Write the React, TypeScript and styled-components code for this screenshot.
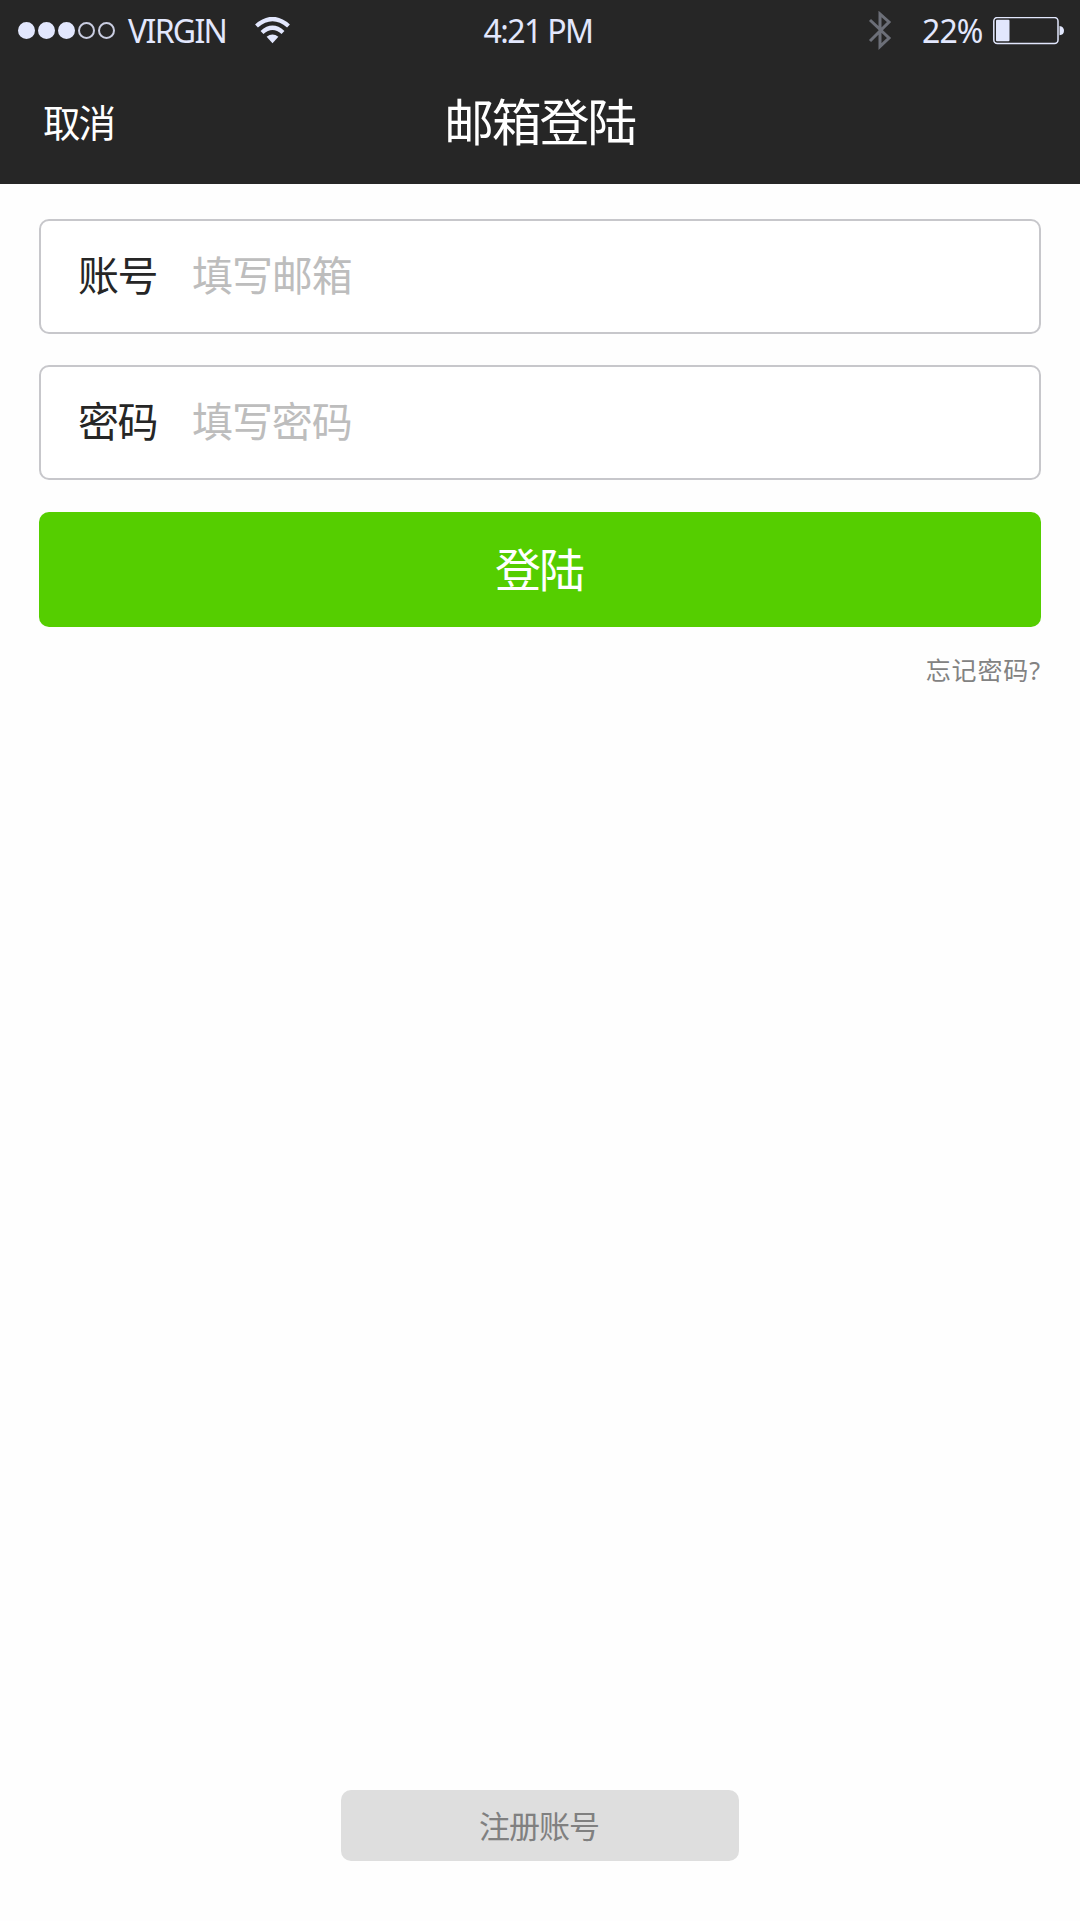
import React from "react";
import styled, { createGlobalStyle } from "styled-components";

const GlobalStyle = createGlobalStyle`
  *, *::before, *::after { box-sizing: border-box; }
  body {
    margin: 0;
    background: #fefefe;
    font-family: "Noto Sans", "Noto Sans CJK SC", sans-serif;
  }
  button, input { font-family: "Noto Sans CJK SC", sans-serif; }
`;

const Screen = styled.div`
  display: flex;
  flex-direction: column;
  width: 1080px;
  height: 1921px;
  background: #fefefe;
`;

const Header = styled.header`
  height: 184px;
  flex: none;
  background: #262626;
`;

const StatusBar = styled.div`
  display: grid;
  grid-template-columns: 1fr auto 1fr;
  align-items: center;
  height: 60px;
  padding: 0 16px 0 18px;
  color: #e2e7fd;
`;

const StatusGroup = styled.div<{ $end?: boolean }>`
  display: flex;
  align-items: center;
  justify-content: ${(p) => (p.$end ? "flex-end" : "flex-start")};
`;

const StatusText = styled.span<{ $tracking: number; $width: number }>`
  width: ${(p) => p.$width}px;
  padding-top: 1px;
  font-size: 32px;
  line-height: 60px;
  letter-spacing: ${(p) => p.$tracking}px;
  white-space: nowrap;
`;

const SignalDots = styled.div`
  display: flex;
  gap: 3px;
  margin-right: 13px;
`;

const Dot = styled.i<{ $on: boolean }>`
  width: 17px;
  height: 17px;
  border: 2px solid ${(p) => (p.$on ? "#e2e7fd" : "#c9cde1")};
  border-radius: 50%;
  background: ${(p) => (p.$on ? "#e2e7fd" : "transparent")};
`;

const Icon = styled.svg<{ $gap?: number }>`
  display: block;
  flex: none;
  margin-right: ${(p) => p.$gap ?? 0}px;
`;

const NavBar = styled.nav`
  display: grid;
  grid-template-columns: 1fr auto 1fr;
  align-items: center;
  height: 124px;
  padding: 0 44px 0 43px;
`;

const Cancel = styled.button`
  justify-self: start;
  padding: 0 0 2px;
  border: 0;
  background: none;
  color: #fff;
  font-size: 37.5px;
  line-height: 122px;
  letter-spacing: -2px;
`;

const Title = styled.h1`
  margin: 0;
  padding-bottom: 5px;
  color: #fff;
  font: 400 50px/119px "Noto Sans CJK SC", sans-serif;
  letter-spacing: -2.2px;
`;

const Form = styled.form`
  display: flex;
  flex-direction: column;
  padding: 35px 39px 0;
`;

const Field = styled.label`
  display: flex;
  align-items: center;
  height: 115px;
  margin-bottom: 31px;
  padding: 0 38px 7px 37px;
  border: 2px solid #c7c7cb;
  border-radius: 10px;
  background: #fff;
`;

const FieldName = styled.span`
  width: 114px;
  color: #262626;
  font: 400 41px/60px "Noto Sans CJK SC", sans-serif;
  letter-spacing: -1.5px;
`;

const Input = styled.input`
  flex: 1;
  min-width: 0;
  height: 60px;
  padding: 0;
  border: 0;
  outline: 0;
  background: none;
  font-size: 41px;
  letter-spacing: -1.1px;
  &::placeholder { color: #bdbdbd; opacity: 1; }
`;

const Submit = styled.button`
  height: 115px;
  margin-top: 1px;
  padding: 0 2px 5px 0;
  border: 0;
  border-radius: 10px;
  background: #55ce00;
  color: #fff;
  font-size: 46px;
  letter-spacing: -2px;
`;

const Forgot = styled.a`
  align-self: flex-end;
  margin-top: 23px;
  color: #828282;
  font: 400 25px/40px "Noto Sans", "Noto Sans CJK SC", sans-serif;
  letter-spacing: 0.9px;
`;

const Footer = styled.footer`
  display: flex;
  justify-content: center;
  margin-top: auto;
  padding-bottom: 60px;
`;

const Register = styled.button`
  width: 398px;
  height: 71px;
  padding: 0 2px 3px 0;
  border: 0;
  border-radius: 10px;
  background: #dedede;
  color: #808080;
  font-size: 31px;
  letter-spacing: -1px;
`;

const signal = [true, true, true, false, false];

const fields = [
  { name: "账号", hint: "填写邮箱", type: "email" },
  { name: "密码", hint: "填写密码", type: "password" },
];

const WifiIcon = () => (
  <Icon width="35" height="28" viewBox="0 0 35 28">
    <g fill="none" stroke="#e2e7fd" strokeWidth="4.3">
      <path d="M1.5 9Q17.5 -5 33.5 9" />
      <path d="M7 15.5Q17.5 6 28 15.5" />
    </g>
    <path d="M11.6 19.8Q17.5 15.2 23.4 19.8L17.5 26.2Z" fill="#e2e7fd" />
  </Icon>
);

const BluetoothIcon = () => (
  <Icon width="24" height="40" viewBox="0 0 24 40" $gap={30}>
    <path
      d="M2 9L21 27L12 35.5V3L21 11L2 30"
      fill="none"
      stroke="#6c6f78"
      strokeWidth="3"
    />
  </Icon>
);

const BatteryIcon = () => (
  <Icon width="71" height="28" viewBox="0 0 71 28">
    <rect x="0.8" y="0.5" width="64.2" height="26" rx="3.5" fill="none" stroke="#e2e7fd" strokeWidth="1.5" />
    <rect x="3" y="2.7" width="13.5" height="21.5" rx="1" fill="#e2e7fd" />
    <path d="M66.5 8.9Q71 9.7 71 13.7T66.5 18.3Z" fill="#e2e7fd" />
  </Icon>
);

export default function App() {
  return (
    <Screen>
      <GlobalStyle />
      <Header>
        <StatusBar>
          <StatusGroup>
            <SignalDots>
              {signal.map((on, i) => (
                <Dot key={i} $on={on} />
              ))}
            </SignalDots>
            <StatusText $tracking={-1.7} $width={127}>VIRGIN</StatusText>
            <WifiIcon />
          </StatusGroup>
          <StatusText $tracking={-1.6} $width={115}>4:21 PM</StatusText>
          <StatusGroup $end>
            <BluetoothIcon />
            <StatusText $tracking={-0.9} $width={71}>22%</StatusText>
            <BatteryIcon />
          </StatusGroup>
        </StatusBar>
        <NavBar>
          <Cancel type="button">取消</Cancel>
          <Title>邮箱登陆</Title>
        </NavBar>
      </Header>
      <Form>
        {fields.map((f) => (
          <Field key={f.name}>
            <FieldName>{f.name}</FieldName>
            <Input type={f.type} placeholder={f.hint} />
          </Field>
        ))}
        <Submit type="button">登陆</Submit>
        <Forgot>忘记密码?</Forgot>
      </Form>
      <Footer>
        <Register type="button">注册账号</Register>
      </Footer>
    </Screen>
  );
}
